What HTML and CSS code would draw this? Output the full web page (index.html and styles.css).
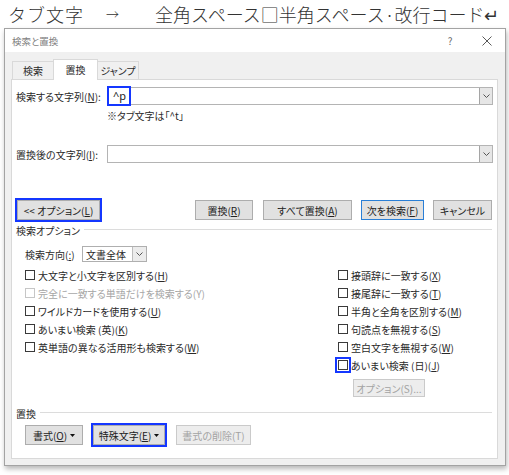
FILE: index.html
```html
<!DOCTYPE html>
<html lang="ja">
<head>
<meta charset="utf-8">
<link rel="stylesheet" href="styles.css">
</head>
<body>
<div class="caption"><span class="c1">タブ文字</span><span class="arrow">→</span><span class="c2">全角スペース□半角スペース·改行コード↵</span></div>
<div class="dialog">
  <div class="titlebar">
    <span class="title">検索と置換</span>
    <span class="help">?</span>
    <svg class="close" width="10" height="10" viewBox="0 0 10 10"><path d="M0.5 0.5 L9.5 9.5 M9.5 0.5 L0.5 9.5" stroke="#5a5a5a" stroke-width="1" fill="none"/></svg>
  </div>
  <div class="body">
    <div class="tabs">
      <div class="tab t1">検索</div>
      <div class="tab sel">置換</div>
      <div class="tab t3">ジャンプ</div>
    </div>
    <div class="panel">
      <div class="row find">
        <span class="lbl">検索する文字列(<u>N</u>):</span>
        <div class="combo"><span class="hl">^p</span><span class="dd"><svg width="7" height="4" viewBox="0 0 7 4"><polyline points="0.5,0.5 3.5,3.5 6.5,0.5" fill="none" stroke="#555" stroke-width="1"/></svg></span></div>
      </div>
      <div class="note">※タブ文字は「^t」</div>
      <div class="row repl">
        <span class="lbl">置換後の文字列(<u>I</u>):</span>
        <div class="combo"><span class="dd"><svg width="7" height="4" viewBox="0 0 7 4"><polyline points="0.5,0.5 3.5,3.5 6.5,0.5" fill="none" stroke="#555" stroke-width="1"/></svg></span></div>
      </div>
      <div class="btnrow">
        <div class="btn opt">&lt;&lt; オプション(<u>L</u>)</div>
        <div class="btngroup">
          <div class="btn b-rep">置換(<u>R</u>)</div>
          <div class="btn b-all">すべて置換(<u>A</u>)</div>
          <div class="btn b-next">次を検索(<u>F</u>)</div>
          <div class="btn b-cancel">キャンセル</div>
        </div>
      </div>
      <div class="group"><span>検索オプション</span><span class="line"></span></div>
      <div class="dir">
        <span class="dirlbl">検索方向(<u>:</u>)</span>
        <div class="select"><span class="seltext">文書全体</span><span class="sdd"><svg width="7" height="4" viewBox="0 0 7 4"><polyline points="0.5,0.5 3.5,3.5 6.5,0.5" fill="none" stroke="#555" stroke-width="1"/></svg></span></div>
      </div>
      <div class="cols">
        <div class="col left">
          <div class="cb"><span class="box"></span>大文字と小文字を区別する(<u>H</u>)</div>
          <div class="cb dis"><span class="box"></span>完全に一致する単語だけを検索する(Y)</div>
          <div class="cb"><span class="box"></span>ワイルドカードを使用する(<u>U</u>)</div>
          <div class="cb"><span class="box"></span>あいまい検索 (英)(<u>K</u>)</div>
          <div class="cb"><span class="box"></span>英単語の異なる活用形も検索する(<u>W</u>)</div>
        </div>
        <div class="col right">
          <div class="cb"><span class="box"></span>接頭辞に一致する(<u>X</u>)</div>
          <div class="cb"><span class="box"></span>接尾辞に一致する(<u>T</u>)</div>
          <div class="cb"><span class="box"></span>半角と全角を区別する(<u>M</u>)</div>
          <div class="cb"><span class="box"></span>句読点を無視する(<u>S</u>)</div>
          <div class="cb"><span class="box"></span>空白文字を無視する(<u>W</u>)</div>
          <div class="cb"><span class="box focus"></span>あいまい検索 (日)(<u>J</u>)</div>
          <div class="btn optbtn disabled">オプション(S)...</div>
        </div>
      </div>
      <div class="group g2"><span>置換</span><span class="line"></span></div>
      <div class="bottom">
        <div class="btn b-fmt">書式(<u>O</u>)<svg class="tri" width="5" height="3" viewBox="0 0 5 3"><polygon points="0,0 5,0 2.5,3" fill="#111"/></svg></div>
        <div class="btn b-spc">特殊文字(<u>E</u>)<svg class="tri" width="5" height="3" viewBox="0 0 5 3"><polygon points="0,0 5,0 2.5,3" fill="#111"/></svg></div>
        <div class="btn b-del disabled">書式の削除(T)</div>
      </div>
    </div>
  </div>
</div>
</body>
</html>
```

FILE: styles.css
```css
html, body {
  margin: 0;
  padding: 0;
  background: #fff;
}
body {
  width: 509px;
  height: 475px;
  overflow: hidden;
  font-family: "Noto Sans CJK JP", "Noto Sans", sans-serif;
  font-feature-settings: "palt";
  color: #2a2a2a;
}
u { text-decoration: underline; text-underline-offset: 1px; }

.caption {
  height: 28px;
  line-height: 28px;
  font-size: 18px;
  font-weight: 300;
  padding-left: 8px;
  white-space: nowrap;
  display: flex;
  font-feature-settings: normal;
  color: #333;
}
.c1 { width: 98px; letter-spacing: 1px; }
.arrow { width: 49px; font-size: 13px; }
.c2 { letter-spacing: 0; }

.dialog {
  margin-left: 4px;
  width: 502px;
  box-sizing: border-box;
  border: 1px solid #a3a3a3;
  background: #f0f0f0;
  box-shadow: 1px 3px 5px rgba(0,0,0,0.28);
}
.titlebar {
  height: 23px;
  background: #fff;
  display: flex;
  align-items: center;
  padding-left: 7px;
  padding-right: 13px;
  font-size: 9.5px;
  color: #808080;
}
.help {
  margin-left: auto;
  width: 10px;
  text-align: center;
  font-size: 10px;
  color: #6a6a6a;
}
.close { margin-left: 27px; }

.body { padding: 0 7px 6px 6px; }
.tabs {
  height: 27px;
  display: flex;
  align-items: flex-end;
  padding-left: 1px;
}
.tab {
  height: 18px;
  box-sizing: border-box;
  border: 1px solid #d9d9d9;
  border-bottom: none;
  font-size: 10px;
  display: flex;
  align-items: center;
  justify-content: center;
}
.t1 { width: 41px; border-right: none; }
.sel {
  width: 45px;
  height: 21px;
  margin-bottom: -1px;
  background: #fff;
  position: relative;
  z-index: 1;
  padding-bottom: 2px;
}
.t3 { width: 41px; border-left: none; }

.panel {
  background: #fff;
  border: 1px solid #d9d9d9;
  padding: 0 4px 13px 4px;
}
.row {
  height: 18px;
  display: flex;
  align-items: center;
  font-size: 10px;
}
.find { margin-top: 7px; }
.repl { margin-top: 23px; }
.lbl { width: 91px; flex: none; }
.combo {
  flex: 1;
  height: 18px;
  box-sizing: border-box;
  border: 1px solid #b4b4b4;
  display: flex;
  align-items: center;
}
.hl {
  margin-left: -1px;
  width: 24px;
  height: 20px;
  box-sizing: border-box;
  border: 2px solid #1437ff;
  font-size: 11px;
  line-height: 15px;
  padding-left: 4px;
  color: #222;
  font-family: "Noto Sans", sans-serif;
}
.dd {
  margin-left: auto;
  width: 13px;
  height: 16px;
  box-sizing: border-box;
  border-left: 1px solid #a5a5a5;
  background: #e6e6e6;
  display: flex;
  align-items: center;
  justify-content: center;
}
.note {
  margin: 5px 0 0 91px;
  height: 12px;
  line-height: 12px;
  font-size: 10px;
}

.btnrow {
  margin-top: 37px;
  height: 20px;
  display: flex;
}
.btn {
  height: 20px;
  box-sizing: border-box;
  border: 1px solid #adadad;
  background: #e1e1e1;
  font-size: 10px;
  display: flex;
  align-items: center;
  justify-content: center;
  white-space: nowrap;
  color: #222;
}
.opt {
  margin-left: 1px;
  width: 83px;
  outline: 2px solid #1437ff;
}
.btngroup {
  margin-left: auto;
  margin-right: 1px;
  display: flex;
}
.b-rep { width: 58px; }
.b-all { width: 89px; margin-left: 10px; }
.b-next { width: 63px; margin-left: 9px; border-color: #2a7fd6; }
.b-cancel { width: 59px; margin-left: 9px; }

.group {
  margin-top: 4px;
  height: 12px;
  display: flex;
  align-items: center;
  font-size: 10px;
}
.group .line {
  flex: 1;
  height: 1px;
  background: #dcdcdc;
  margin-left: 4px;
  margin-right: 1px;
  margin-top: -1px;
}
.g2 { margin-top: 10px; }

.dir {
  margin-top: 10px;
  height: 16px;
  display: flex;
  align-items: center;
  padding-left: 9px;
  font-size: 10px;
}
.dirlbl { width: 57px; }
.select {
  width: 65px;
  height: 16px;
  box-sizing: border-box;
  border: 1px solid #afafaf;
  display: flex;
  align-items: center;
}
.seltext { padding-left: 3px; }
.sdd {
  margin-left: auto;
  width: 14px;
  height: 14px;
  box-sizing: border-box;
  border-left: 1px solid #bdbdbd;
  background: #ececec;
  display: flex;
  align-items: center;
  justify-content: center;
}

.cols {
  margin-top: 4px;
  display: flex;
}
.col.left {
  width: 322px;
  box-sizing: border-box;
  padding-left: 9px;
}
.col.right { flex: 1; }
.cb {
  height: 18px;
  display: flex;
  align-items: center;
  font-size: 10px;
  white-space: nowrap;
}
.box {
  width: 10px;
  height: 10px;
  box-sizing: border-box;
  border: 1px solid #3a3a3a;
  background: #fff;
  margin-right: 3px;
  flex: none;
}
.box.focus {
  outline: 2px solid #1437ff;
  outline-offset: 1px;
}
.cb.dis { color: #a6a6a6; }
.cb.dis .box { border-color: #c6c6c6; }

.btn.disabled {
  background: #ededed;
  border-color: #cacaca;
  color: #a3a3a3;
}
.optbtn {
  margin-top: 5px;
  margin-left: 15px;
  width: 72px;
  height: 18px;
}

.bottom {
  margin-top: 6px;
  display: flex;
  padding-left: 9px;
}
.b-fmt { width: 58px; }
.b-spc { width: 72px; margin-left: 10px; outline: 2px solid #1437ff; }
.b-del { width: 75px; margin-left: 11px; }
.tri { margin-left: 3px; }
```
